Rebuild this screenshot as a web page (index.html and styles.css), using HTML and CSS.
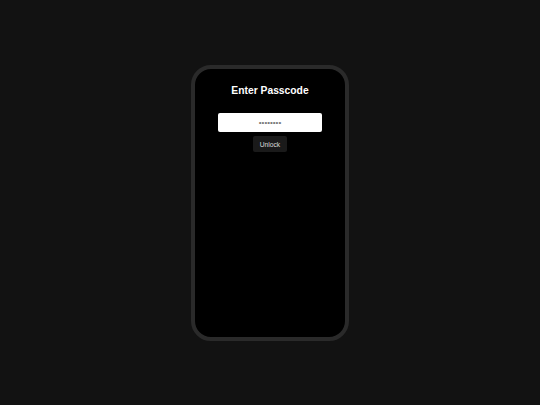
FILE: index.html
```html
<!DOCTYPE html>
<html>
<head>
<meta charset="utf-8">
<link rel="stylesheet" href="styles.css">
</head>
<body>
<div class="stage">
  <div class="phone">
    <h1 class="title">Enter Passcode</h1>
    <div class="field">••••••••</div>
    <button class="unlock">Unlock</button>
  </div>
</div>
</body>
</html>
```
FILE: styles.css
```css
html, body {
  margin: 0;
  padding: 0;
  background: #121212;
  font-family: "Liberation Sans", Arial, sans-serif;
}
.stage {
  width: 540px;
  height: 405px;
  display: flex;
  align-items: center;
  justify-content: center;
}
.phone {
  box-sizing: border-box;
  width: 158px;
  height: 276px;
  border: 4px solid #2a2a2a;
  border-radius: 20px;
  background: #000;
  display: flex;
  flex-direction: column;
  align-items: center;
  padding-top: 16px;
}
.title {
  margin: 0;
  font-size: 10.3px;
  line-height: 12px;
  font-weight: bold;
  color: #fff;
}
.field {
  margin-top: 16.5px;
  width: 104px;
  height: 19px;
  background: #fff;
  border-radius: 2px;
  color: #777;
  font-size: 8px;
  line-height: 19px;
  text-align: center;
}
.unlock {
  margin-top: 4px;
  width: 34px;
  height: 16px;
  padding: 0;
  border: none;
  border-radius: 2px;
  background: #1a1a1a;
  color: #dcdcdc;
  font-family: "Liberation Sans", Arial, sans-serif;
  font-size: 6.7px;
}
```
